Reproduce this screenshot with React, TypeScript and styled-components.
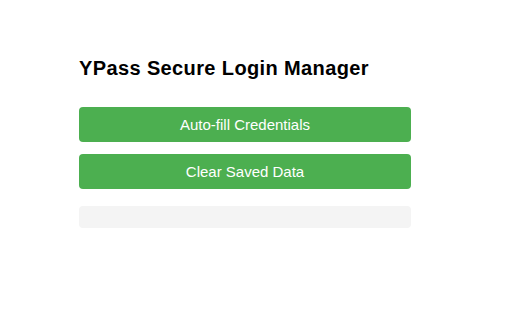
import styled, { createGlobalStyle } from "styled-components";

const GlobalStyle = createGlobalStyle`
  body {
    margin: 0;
    background: #ffffff;
    font-family: "Liberation Sans", Arial, sans-serif;
  }
`;

const Popup = styled.div`
  width: 332px;
  padding: 57px 0 0 79px;
  display: flex;
  flex-direction: column;
`;

const Title = styled.h1`
  margin: 0 0 27px;
  font-size: 20px;
  line-height: 23px;
  letter-spacing: 0.38px;
  font-weight: 700;
  color: #000;
`;

const ActionButton = styled.button<{ $last?: boolean }>`
  display: block;
  width: 100%;
  height: 35px;
  margin-bottom: ${(p) => (p.$last ? "17px" : "12px")};
  border: none;
  border-radius: 4px;
  background-color: #4caf50;
  color: #ffffff;
  font-family: inherit;
  font-size: 15px;
  cursor: pointer;

  &:hover {
    background-color: #45a049;
  }
`;

const Status = styled.div`
  height: 22px;
  border-radius: 4px;
  background-color: #f4f4f4;
  font-size: 13px;
  color: #333;
`;

function App() {
  return (
    <>
      <GlobalStyle />
      <Popup>
        <Title>YPass Secure Login Manager</Title>
        <ActionButton type="button">Auto-fill Credentials</ActionButton>
        <ActionButton type="button" $last>Clear Saved Data</ActionButton>
        <Status />
      </Popup>
    </>
  );
}

export default App;
